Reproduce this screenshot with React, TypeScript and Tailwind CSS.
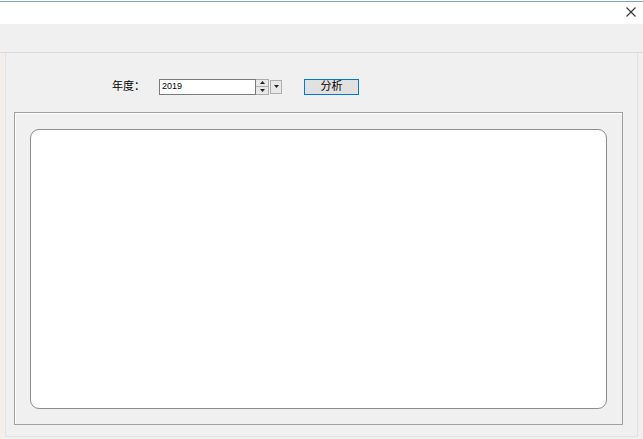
export default function App() {
  return (
    <div className="w-[643px] h-[439px] bg-[#f0f0f0] flex flex-col overflow-hidden font-['Liberation_Sans','Noto_Sans_CJK_SC',sans-serif] text-black">
      {/* title strip */}
      <div className="h-[24px] shrink-0 bg-white pt-[1px]">
        <div className="h-full border-t border-[#7aa3cf] flex justify-end items-center pr-[7px]">
          <svg width="10" height="10" viewBox="0 0 10 10" className="mt-[-2px]">
            <path d="M0.5 0.5 L9.5 9.5 M9.5 0.5 L0.5 9.5" stroke="#333" strokeWidth="1.1" />
          </svg>
        </div>
      </div>

      {/* toolbar band */}
      <div className="h-[29px] shrink-0 border-b border-[#dadada]" />

      {/* main panel */}
      <div className="flex-1 flex pl-[1px]">
        <div className="w-[1px] bg-[#fbe9e2]" />
        <div className="flex-1 flex flex-col ml-[3px] mr-[5px] mb-[2px] border-l border-r border-b border-[#e2e2e2] border-t-white">
          <div className="flex items-center h-[17px] mt-[25px]">
            <span className="ml-[106px] text-[11px] leading-none">年度：</span>
            <div className="ml-[14px] flex items-center h-[16px]">
              <div className="w-[97px] h-[16px] bg-white border border-[#7a7a7a] flex items-center pl-[2px] text-[9px] leading-none">
                2019
              </div>
              <div className="w-[13px] h-[16px] flex flex-col border border-[#adadad] border-l-0">
                <div className="flex-1 bg-[#e8e8e8] border-b border-[#adadad] flex items-center justify-center">
                  <svg width="5" height="3" viewBox="0 0 5 3"><path d="M0 3 L2.5 0 L5 3 Z" fill="#222" /></svg>
                </div>
                <div className="flex-1 bg-[#e8e8e8] flex items-center justify-center">
                  <svg width="5" height="3" viewBox="0 0 5 3"><path d="M0 0 L2.5 3 L5 0 Z" fill="#222" /></svg>
                </div>
              </div>
              <div className="ml-[1px] w-[12px] h-[14px] bg-[#e8e8e8] border border-[#adadad] flex items-center justify-center">
                <svg width="5" height="3" viewBox="0 0 5 3"><path d="M0 0 L2.5 3 L5 0 Z" fill="#222" /></svg>
              </div>
            </div>
            <button className="ml-[22px] w-[55px] h-[16px] bg-[#e1e1e1] border border-[#0078d7] text-[11px] leading-none flex items-center justify-center">
              分析
            </button>
          </div>

          {/* group box */}
          <div className="flex-1 flex ml-[8px] mr-[14px] mt-[17px] mb-[11px] border border-[#a0a0a0] shadow-[inset_1px_1px_0_#fff] pt-[16px] pl-[15px] pr-[15px] pb-[15px]">
            <div className="flex-1 bg-white border border-[#8c8c8c] rounded-[9px]" />
          </div>
        </div>
      </div>
    </div>
  );
}
